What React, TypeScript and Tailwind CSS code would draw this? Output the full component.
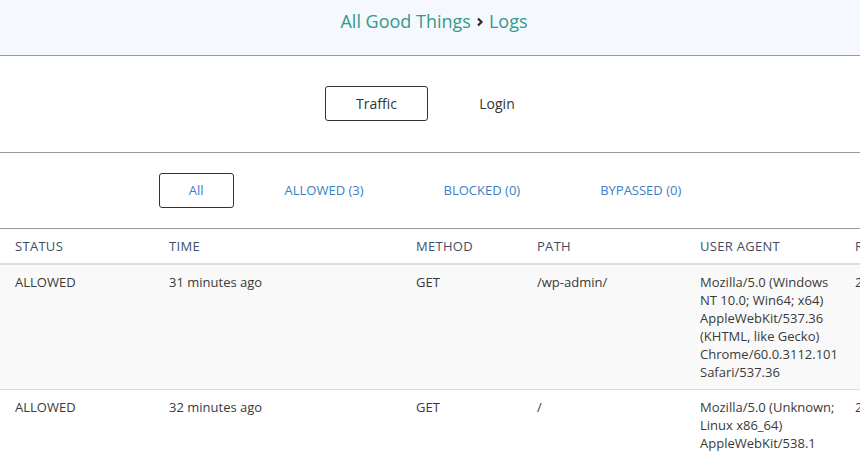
import React from "react";

const cols = "grid grid-cols-[154px_247px_121px_163px_155px_160px]";

type Row = { status: string; time: string; method: string; path: string; ua: string[]; ip: string };

const rows: Row[] = [
  {
    status: "ALLOWED",
    time: "31 minutes ago",
    method: "GET",
    path: "/wp-admin/",
    ua: ["Mozilla/5.0 (Windows", "NT 10.0; Win64; x64)", "AppleWebKit/537.36", "(KHTML, like Gecko)", "Chrome/60.0.3112.101", "Safari/537.36"],
    ip: "203.0.113.7",
  },
  {
    status: "ALLOWED",
    time: "32 minutes ago",
    method: "GET",
    path: "/",
    ua: ["Mozilla/5.0 (Unknown;", "Linux x86_64)", "AppleWebKit/538.1", "(KHTML, like Gecko)", "PhantomJS/2.1.1", "Safari/538.1"],
    ip: "203.0.113.9",
  },
];

export default function App() {
  return (
    <div
      className="w-[860px] h-[454px] overflow-hidden bg-white text-[#3a3a3a]"
      style={{ fontFamily: '"Open Sans", "Noto Sans", sans-serif' }}
    >
      <div className="h-[56px] bg-[#f5f8fe] border-b border-[#9a9a9a] flex items-center justify-center pb-[13px] pl-[8px]">
        <span className="text-[18px] text-[#349a8b]">All Good Things</span>
        <svg width="14" height="14" viewBox="0 0 14 14" className="mx-[2px] mt-[2px]">
          <path d="M5 3.5 L8.5 7 L5 10.5" fill="none" stroke="#2b2b2b" strokeWidth="2.2" />
        </svg>
        <span className="text-[18px] text-[#349a8b]">Logs</span>
      </div>

      <div className="h-[97px] border-b border-[#9a9a9a] flex items-center justify-center gap-[17px] pl-[13px] pb-[2px]">
        <div className="w-[103px] h-[35px] border border-[#333] rounded-[3px] flex items-center justify-center text-[14px] text-[#333]">
          Traffic
        </div>
        <div className="w-[103px] h-[35px] flex items-center justify-center text-[14px] text-[#333] pl-[1px]">
          Login
        </div>
      </div>

      <div className="h-[76px] border-b border-[#9a9a9a] flex items-center justify-center gap-[22px] pl-[9px]">
        <div className="h-[35px] px-[29px] border border-[#333] rounded-[3px] flex items-center text-[13px] text-[#3c7ec4]">
          All
        </div>
        <div className="h-[35px] px-[29px] flex items-center text-[13px] text-[#3c7ec4]">ALLOWED (3)</div>
        <div className="h-[35px] px-[29px] flex items-center text-[13px] text-[#3c7ec4]">BLOCKED (0)</div>
        <div className="h-[35px] px-[29px] flex items-center text-[13px] text-[#3c7ec4]">BYPASSED (0)</div>
      </div>

      <div className={`${cols} h-[36px] border-b-2 border-[#dedede] items-center text-[13px] tracking-[0.3px] text-[#3f4e66] pt-[1px]`}>
        <div className="pl-[15px]">STATUS</div>
        <div className="pl-[15px]">TIME</div>
        <div className="pl-[15px]">METHOD</div>
        <div className="pl-[15px]">PATH</div>
        <div className="pl-[15px]">USER AGENT</div>
        <div className="pl-[15px] whitespace-nowrap">REMOTE IP</div>
      </div>

      {rows.map((r, i) => (
        <div
          key={i}
          className={`${cols} py-[8px] text-[13px] leading-[18px] ${i === 0 ? "bg-[#f9f9f9] border-b border-[#dddddd]" : "bg-white"}`}
        >
          <div className="pl-[15px]">{r.status}</div>
          <div className="pl-[15px]">{r.time}</div>
          <div className="pl-[15px]">{r.method}</div>
          <div className="pl-[15px]">{r.path}</div>
          <div className="pl-[15px]">
            {r.ua.map((l, j) => (
              <div key={j} className="whitespace-nowrap">{l}</div>
            ))}
          </div>
          <div className="pl-[15px] whitespace-nowrap">{r.ip}</div>
        </div>
      ))}
    </div>
  );
}
